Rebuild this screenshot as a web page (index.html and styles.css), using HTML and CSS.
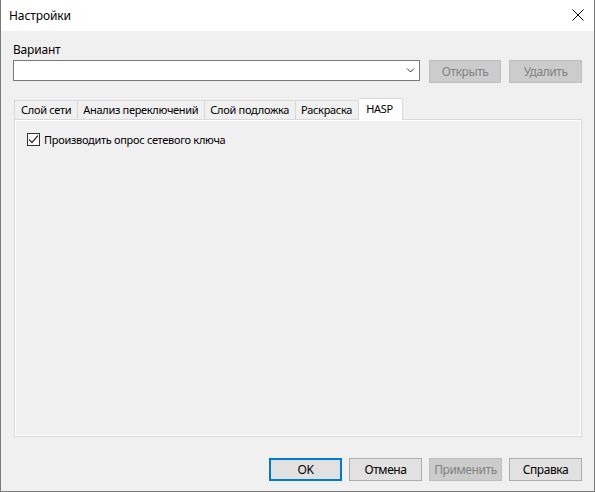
FILE: index.html
```html
<!DOCTYPE html>
<html lang="ru">
<head>
    <meta charset="UTF-8">
    <title>Настройки</title>
    <link rel="stylesheet" href="styles.css">
</head>
<body>
    <div class="window">
        <div class="titlebar">
            <span class="title">Настройки</span>
            <span class="close">
                <svg width="12" height="12" viewBox="0 0 12 12">
                    <path d="M0.5 0.5 L11.5 11.5 M11.5 0.5 L0.5 11.5" stroke="#000" stroke-width="1" fill="none"/>
                </svg>
            </span>
        </div>

        <div class="client">
            <label class="field-label">Вариант</label>
            <div class="variant-row">
                <div class="combo">
                    <span class="combo-text"></span>
                    <svg class="combo-arrow" width="9" height="5" viewBox="0 0 9 5">
                        <path d="M1 0.5 L4.5 4 L8 0.5" stroke="#333" stroke-width="1" fill="none"/>
                    </svg>
                </div>
                <button class="btn" disabled>Открыть</button>
                <button class="btn" disabled>Удалить</button>
            </div>

            <div class="tabs">
                <div class="tab">Слой сети</div>
                <div class="tab">Анализ переключений</div>
                <div class="tab">Слой подложка</div>
                <div class="tab">Раскраска</div>
                <div class="tab tab-active">HASP</div>
            </div>
            <div class="tab-panel">
                <label class="check">
                    <span class="check-box">
                        <svg width="11" height="11" viewBox="0 0 11 11">
                            <path d="M1 5.5 L4 8.5 L10 1.5" stroke="#333" stroke-width="1.2" fill="none"/>
                        </svg>
                    </span>
                    Производить опрос сетевого ключа
                </label>
            </div>

            <div class="footer">
                <button class="btn btn-default">OK</button>
                <button class="btn">Отмена</button>
                <button class="btn" disabled>Применить</button>
                <button class="btn">Справка</button>
            </div>
        </div>
    </div>
</body>
</html>
```

FILE: styles.css
```css
* {
    margin: 0;
    padding: 0;
    box-sizing: border-box;
}

body {
    font-family: "Noto Sans", "Liberation Sans", sans-serif;
    font-size: 11px;
    letter-spacing: -0.3px;
    color: #000;
    background: #fff;
}

.window {
    width: 595px;
    height: 492px;
    border: 1px solid #7a7a7a;
    border-top: none;
    display: flex;
    flex-direction: column;
    background: #f0f0f0;
}

.titlebar {
    height: 31px;
    background: #fff;
    display: flex;
    align-items: center;
    justify-content: space-between;
    padding: 0 9px 1px 8px;
}

.title {
    font-size: 12px;
    letter-spacing: -0.1px;
}

.close {
    display: flex;
    margin-right: 1px;
}

.client {
    flex: 1;
    padding: 9px 12px 0 12px;
    display: flex;
    flex-direction: column;
}

.field-label {
    height: 20px;
    line-height: 20px;
    font-size: 12px;
    letter-spacing: -0.2px;
}

.variant-row {
    display: flex;
    align-items: flex-start;
    gap: 8px;
}

.combo {
    width: 409px;
    height: 21px;
    background: #fff;
    border: 1px solid #7a7a7a;
    display: flex;
    align-items: center;
    justify-content: flex-end;
    padding-right: 4px;
    margin-right: 1px;
}

.btn {
    width: 73px;
    height: 23px;
    font-family: inherit;
    font-size: 12px;
    letter-spacing: -0.4px;
    background: #e1e1e1;
    border: 1px solid #adadad;
    color: #000;
}

.btn:disabled {
    background: #cccccc;
    border-color: #bfbfbf;
    color: #838383;
}

.btn-default {
    border: 2px solid #0078d7;
}

.tabs {
    display: flex;
    align-items: flex-end;
    margin-top: 14px;
    padding-left: 1px;
    height: 22px;
}

.tab {
    height: 19px;
    line-height: 17px;
    padding: 0 6px 0 5px;
    border: 1px solid #d9d9d9;
    border-bottom: none;
    border-left: none;
    background: #f0f0f0;
}

.tab:first-child {
    border-left: 1px solid #d9d9d9;
    padding-left: 6px;
}

.tab-active {
    height: 22px;
    line-height: 19px;
    padding: 0 9px 0 7px;
    background: #fff;
    margin-bottom: -1px;
    position: relative;
}

.tab-panel {
    width: 568px;
    height: 318px;
    margin-left: 1px;
    border: 1px solid #d9d9d9;
    box-shadow: inset 0 0 0 1px #fff;
    padding: 12px 12px;
}

.check {
    display: flex;
    align-items: center;
    gap: 4px;
    height: 15px;
}

.check-box {
    width: 13px;
    height: 13px;
    background: #fff;
    border: 1px solid #333;
    display: flex;
    align-items: center;
    justify-content: center;
}

.footer {
    display: flex;
    justify-content: flex-end;
    gap: 7px;
    margin-top: 21px;
}
```
